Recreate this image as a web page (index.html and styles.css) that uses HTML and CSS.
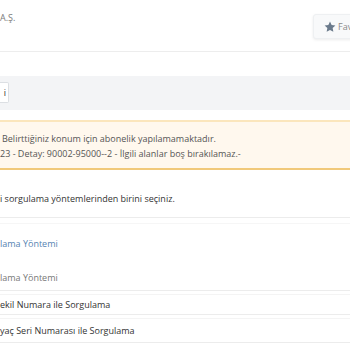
FILE: index.html
```html
<!DOCTYPE html>
<html lang="tr">
<head>
<meta charset="utf-8">
<link rel="stylesheet" href="styles.css">
</head>
<body>
<div class="page">
  <header class="header">
    <div class="company">A.Ş.</div>
    <button class="fav-btn">
      <svg class="star" viewBox="0 0 24 24" width="12" height="12"><path d="M12 1.2l3.3 6.8 7.5.9-5.5 5.2 1.4 7.5L12 18l-6.7 3.6 1.4-7.5-5.5-5.2 7.5-.9z" fill="#6b7b8c"/></svg>
      <span>Favorilere Ekle</span>
    </button>
  </header>
  <div class="subbar"></div>
  <div class="toolbar">
    <button class="tool-btn">i</button>
  </div>
  <div class="alert">
    <div>Belirttiğiniz konum için abonelik yapılamamaktadır.</div>
    <div class="alert-detail">23 - Detay: 90002-95000--2 - İlgili alanlar boş bırakılamaz.-</div>
  </div>
  <p class="intro">i sorgulama yöntemlerinden birini seçiniz.</p>
  <div class="divider"></div>
  <div class="field-label">lama Yöntemi</div>
  <div class="options">
    <div class="option placeholder">lama Yöntemi</div>
    <div class="option">ekil Numara ile Sorgulama</div>
    <div class="option last">yaç Seri Numarası ile Sorgulama</div>
  </div>
</div>
</body>
</html>
```
FILE: styles.css
```css
html, body {
  margin: 0;
  padding: 0;
  background: #fff;
}
body {
  font-family: "Open Sans", "DejaVu Sans", sans-serif;
  font-size: 9px;
  color: #444;
  overflow: hidden;
  width: 350px;
  height: 350px;
}
.page {
  width: 350px;
}
.header {
  height: 52px;
  display: flex;
  justify-content: space-between;
  align-items: flex-start;
  border-bottom: 1px solid #ededed;
  box-shadow: 0 1px 2px rgba(0,0,0,0.04);
  box-sizing: border-box;
}
.company {
  padding-top: 11px;
  color: #7a7a7a;
  font-size: 9px;
}
.fav-btn {
  flex: none;
  width: 100px;
  margin-top: 14px;
  margin-right: -63px;
  height: 25px;
  padding: 0 0 0 10px;
  display: flex;
  align-items: center;
  gap: 2px;
  background: #f8f9fa;
  border: 1px solid #eef0f2;
  border-radius: 3px;
  box-shadow: 0 1px 3px rgba(0,0,0,0.08);
  font-family: "Open Sans", sans-serif;
  font-size: 9px;
  color: #8a8a8a;
  white-space: nowrap;
  overflow: hidden;
}
.star { display: block; flex: none; }
.subbar {
  height: 24px;
  background: #fff;
}
.toolbar {
  height: 34px;
  background: #f3f4f6;
  padding-top: 6px;
  box-sizing: border-box;
}
.tool-btn {
  display: block;
  height: 21px;
  width: 9px;
  padding: 0 2px 0 0;
  text-align: right;
  background: #fff;
  border: 1px solid #dcdfe3;
  border-left: none;
  border-radius: 0 2px 2px 0;
  font-family: "Open Sans", sans-serif;
  font-size: 9px;
  color: #333;
}
.alert {
  margin-top: 10px;
  height: 50px;
  box-sizing: border-box;
  background: #fff8ee;
  border-top: 2px solid #fbe6bd;
  border-bottom: 2px solid #f1c97a;
  padding: 9px 0 0 2px;
  line-height: 15px;
  color: #555;
}
.alert-detail {
  margin-left: -2px;
}
.intro {
  margin: 23px 0 0 0;
  line-height: 12px;
  color: #333;
}
.divider {
  margin-top: 12px;
  height: 5px;
  border-top: 1px solid #ececec;
  border-bottom: 1px solid #f6f6f6;
}
.field-label {
  margin-top: 14px;
  line-height: 12px;
  color: #5583b2;
}
.options {
  margin-top: 16px;
  display: flex;
  flex-direction: column;
  gap: 3px;
}
.option {
  height: 21px;
  line-height: 19px;
  box-sizing: border-box;
  border-bottom: 1px solid #ececec;
  border-top: 1px solid #f4f4f4;
  color: #333;
}
.option.placeholder {
  height: 25px;
  line-height: 24px;
  border-top: none;
  color: #777;
}
.option.last {
  height: 25px;
  line-height: 23px;
}
```
